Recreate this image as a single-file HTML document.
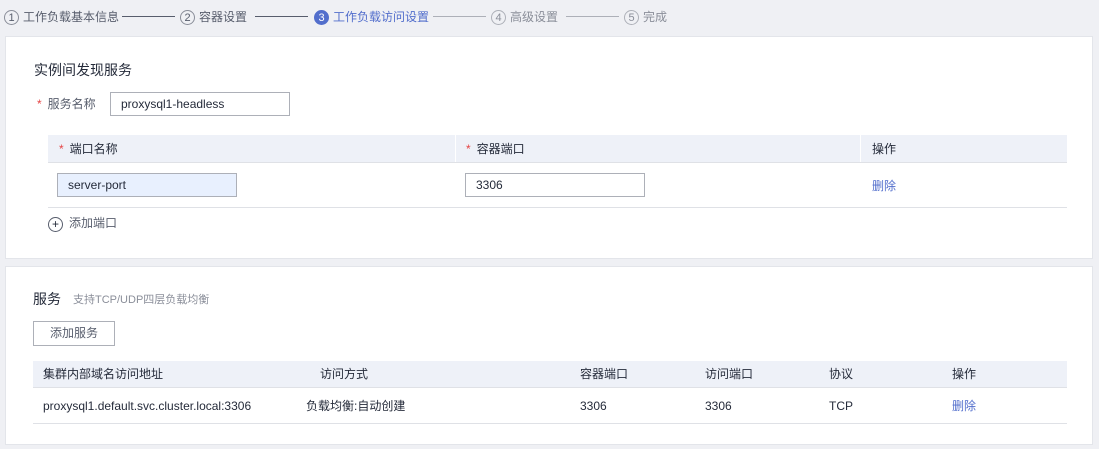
<!DOCTYPE html><html><head><meta charset="utf-8"><style>
body{margin:0;width:1099px;height:449px;background:#eff0f4;font-family:"Liberation Sans","Noto Sans CJK SC",sans-serif;font-size:12px;color:#252b3a;position:relative;overflow:hidden}
.a{position:absolute;line-height:16px;white-space:nowrap}
.panel{position:absolute;left:5px;width:1088px;background:#fff;border:1px solid #e3e5ea;box-sizing:border-box}
.step{position:absolute;top:8px;height:18px;line-height:18px;color:#575d6c;white-space:nowrap}
.c{display:inline-block;width:15px;height:15px;border:1px solid #8a8e99;border-radius:50%;text-align:center;line-height:14px;font-size:11px;vertical-align:middle;margin-right:4px;box-sizing:border-box}
.ln{position:absolute;top:16px;height:1px;background:#575d6c}
.inp{position:absolute;border:1px solid #adb0b8;box-sizing:border-box;height:24px;line-height:22px;padding-left:10px;background:#fff}
.th{position:absolute;height:27px;background:#eef1f8}
.star{color:#e54545;margin-right:6px}
.lk{color:#526ecc}
</style></head><body>
<div class="step" style="left:4px"><span class="c">1</span>工作负载基本信息</div><div class="ln" style="left:122px;width:53px"></div>
<div class="step" style="left:180px"><span class="c">2</span>容器设置</div><div class="ln" style="left:255px;width:53px"></div>
<div class="step" style="left:314px;color:#526ecc"><span class="c" style="background:#526ecc;border-color:#526ecc;color:#fff">3</span>工作负载访问设置</div><div class="ln" style="left:433px;width:53px;background:#adb0b8"></div>
<div class="step" style="left:491px;color:#8a8e99"><span class="c" style="border-color:#adb0b8">4</span>高级设置</div><div class="ln" style="left:566px;width:53px;background:#adb0b8"></div>
<div class="step" style="left:624px;color:#8a8e99"><span class="c" style="border-color:#adb0b8">5</span>完成</div>

<div class="panel" style="top:36px;height:223px"></div>
<div class="a" style="left:34px;top:61px;font-size:14px;line-height:18px">实例间发现服务</div>
<div class="a" style="left:37px;top:96px;color:#575d6c"><span class="star">*</span>服务名称</div>
<div class="inp" style="left:110px;top:92px;width:180px">proxysql1-headless</div>
<div class="th" style="left:48px;top:135px;width:1019px"></div>
<div class="a" style="left:455px;top:135px;width:1px;height:27px;background:#fff"></div>
<div class="a" style="left:860px;top:135px;width:1px;height:27px;background:#fff"></div>
<div class="a" style="left:59px;top:141px"><span class="star">*</span>端口名称</div>
<div class="a" style="left:466px;top:141px"><span class="star">*</span>容器端口</div>
<div class="a" style="left:872px;top:141px">操作</div>
<div class="a" style="left:48px;top:162px;width:1019px;height:1px;background:#dfe1e6"></div>
<div class="inp" style="left:57px;top:173px;width:180px;background:#e8f0fe">server-port</div>
<div class="inp" style="left:465px;top:173px;width:180px">3306</div>
<div class="a lk" style="left:872px;top:178px">删除</div>
<div class="a" style="left:48px;top:207px;width:1019px;height:1px;background:#dfe1e6"></div>
<div class="a" style="left:48px;top:217px;width:13px;height:13px;border:1px solid #575d6c;border-radius:50%;text-align:center;line-height:12px;font-size:12px">+</div>
<div class="a" style="left:69px;top:215px;color:#575d6c">添加端口</div>

<div class="panel" style="top:266px;height:179px"></div>
<div class="a" style="left:33px;top:290px;font-size:14px;line-height:18px">服务</div>
<div class="a" style="left:73px;top:292px;color:#8a8e99;font-size:11px">支持TCP/UDP四层负载均衡</div>
<div class="a" style="left:33px;top:321px;width:82px;height:25px;border:1px solid #adb0b8;box-sizing:border-box;text-align:center;line-height:23px;color:#575d6c">添加服务</div>
<div class="th" style="left:33px;top:361px;width:1034px;height:26px"></div>
<div class="a" style="left:43px;top:366px">集群内部域名访问地址</div>
<div class="a" style="left:320px;top:366px">访问方式</div>
<div class="a" style="left:580px;top:366px">容器端口</div>
<div class="a" style="left:705px;top:366px">访问端口</div>
<div class="a" style="left:829px;top:366px">协议</div>
<div class="a" style="left:952px;top:366px">操作</div>
<div class="a" style="left:33px;top:387px;width:1034px;height:1px;background:#dfe1e6"></div>
<div class="a" style="left:43px;top:398px">proxysql1.default.svc.cluster.local:3306</div>
<div class="a" style="left:306px;top:398px">负载均衡:自动创建</div>
<div class="a" style="left:580px;top:398px">3306</div>
<div class="a" style="left:705px;top:398px">3306</div>
<div class="a" style="left:829px;top:398px">TCP</div>
<div class="a lk" style="left:952px;top:398px">删除</div>
<div class="a" style="left:33px;top:423px;width:1034px;height:1px;background:#dfe1e6"></div>
</body></html>
